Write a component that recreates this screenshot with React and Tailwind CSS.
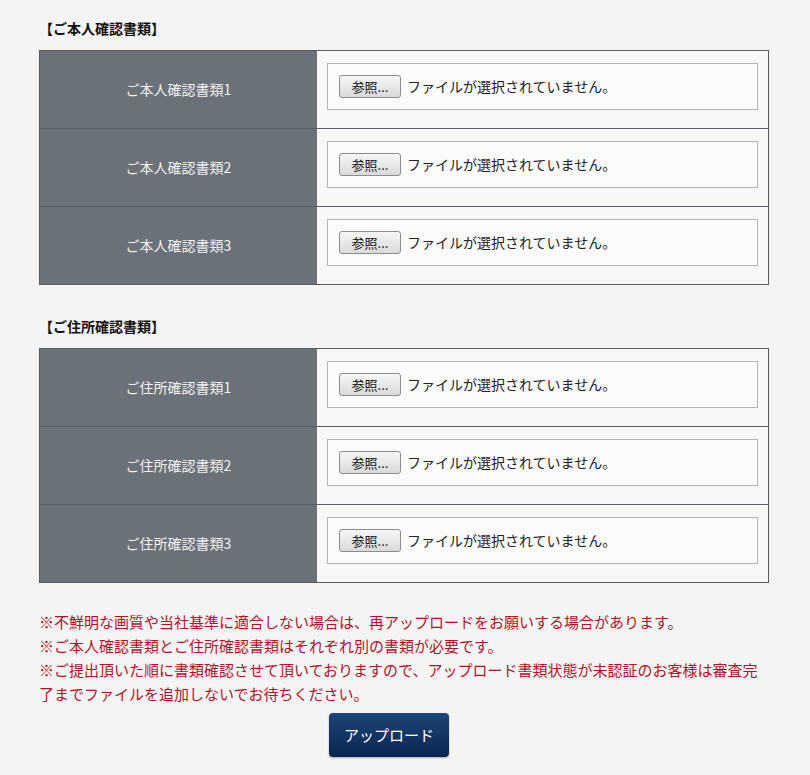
const sections = [
  { title: '【ご本人確認書類】', label: 'ご本人確認書類' },
  { title: '【ご住所確認書類】', label: 'ご住所確認書類' },
];

const notes = [
  '※不鮮明な画質や当社基準に適合しない場合は、再アップロードをお願いする場合があります。',
  '※ご本人確認書類とご住所確認書類はそれぞれ別の書類が必要です。',
  '※ご提出頂いた順に書類確認させて頂いておりますので、アップロード書類状態が未認証のお客様は審査完了までファイルを追加しないでお待ちください。',
];

const FileRow = ({ label, last }) => (
  <div className={`grid grid-cols-[277px_1fr] ${last ? '' : 'border-b border-[#5a5f66]'}`}>
    <div className="flex h-[77px] items-center justify-center bg-[#6a7178] text-[14px] text-[#f2f2f2]">{label}</div>
    <div className="bg-[#f7f7f7] pl-[10px] pr-[10px] pt-[12px]">
      <div className="flex h-[47px] items-center border border-[#b4b4b4] bg-[#fbfbfb] pl-[11px]">
        <button
          type="button"
          className="h-[23px] w-[62px] rounded-[3px] border border-[#8c8c8c] bg-gradient-to-b from-[#f6f6f6] to-[#dadada] text-[13px] leading-none text-[#111]"
        >
          参照...
        </button>
        <span className="ml-[6px] text-[14px] text-[#222]">ファイルが選択されていません。</span>
      </div>
    </div>
  </div>
);

const Section = ({ title, label, first }) => (
  <section className={first ? 'pt-[18px]' : 'mt-[31px]'}>
    <h2 className="mb-3 text-[14px] font-bold leading-[20px] text-[#111]">{title}</h2>
    <div className="border border-[#5a5a5a]">
      {[1, 2, 3].map((n) => (
        <FileRow key={n} label={`${label}${n}`} last={n === 3} />
      ))}
    </div>
  </section>
);

export default function App() {
  return (
    <div
      className="min-h-[775px] w-full bg-[#f4f4f4]"
      style={{ fontFamily: '"Noto Sans CJK JP", "Noto Sans", sans-serif' }}
    >
      <div className="ml-[39px] w-[730px]">
        {sections.map((s, i) => (
          <Section key={s.title} {...s} first={i === 0} />
        ))}

        <div className="mt-[27px] text-[15px] leading-[24px] text-[#b0122a]">
          {notes.map((n) => (
            <p key={n}>{n}</p>
          ))}
        </div>

        <div className="mt-[7px] pl-[290px]">
          <button
            type="button"
            className="h-[44px] w-[120px] rounded-[4px] bg-gradient-to-b from-[#1d4577] to-[#0a2650] text-[15px] text-white shadow-[0_1px_2px_rgba(0,0,0,0.3)]"
          >
            アップロード
          </button>
        </div>
      </div>
    </div>
  );
}
